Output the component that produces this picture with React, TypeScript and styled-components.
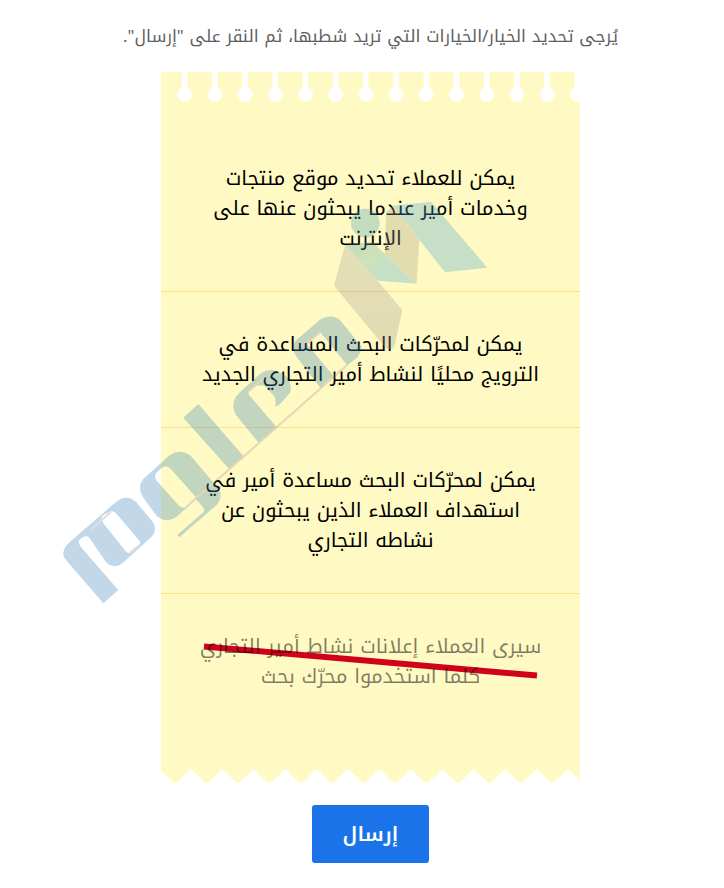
import React, { useState } from "react";
import styled, { createGlobalStyle } from "styled-components";

const GlobalStyle = createGlobalStyle`
  *, *::before, *::after { box-sizing: border-box; }
  body {
    margin: 0;
    background: #fff;
    font-family: "Noto Kufi Arabic", "DejaVu Sans", sans-serif;
  }
`;

const PAPER = "#fffac3";

const Page = styled.main`
  display: flex;
  flex-direction: column;
  align-items: center;
  padding: 20px 8px 24px 25px;
`;

const Prompt = styled.p`
  margin: 0 0 20px;
  font-size: 17px;
  line-height: 32px;
  color: #5f6062;
  text-align: center;
`;

const Sheet = styled.form`
  display: flex;
  flex-direction: column;
  align-items: center;
  width: 100%;
`;

const Note = styled.fieldset`
  position: relative;
  display: flex;
  flex-direction: column;
  width: 100%;
  max-width: 419px;
  margin: 0 0 22px;
  padding: 0;
  border: 0;
`;

const Edge = styled.svg`
  display: block;
  width: 100%;
`;

const OptionList = styled.ul`
  margin: 0;
  padding: 22px 0 40px;
  list-style: none;
  background: ${PAPER};
`;

const OptionItem = styled.li`
  & + & {
    border-top: 1px solid #fde08c;
  }
`;

const OptionLabel = styled.label`
  display: block;
  position: relative;
  padding: 37px 38px 38px;
  cursor: pointer;
`;

const HiddenCheck = styled.input`
  position: absolute;
  opacity: 0;
  inset: 0;
  margin: 0;
  cursor: pointer;
`;

const OptionText = styled.span<{ $struck: boolean }>`
  display: block;
  position: relative;
  font-size: 20px;
  line-height: 30px;
  text-align: center;
  color: ${(p) => (p.$struck ? "rgba(0, 0, 0, 0.5)" : "#000")};
`;

const Strike = styled.svg`
  position: absolute;
  inset: 0;
  width: 100%;
  height: 100%;
  pointer-events: none;
`;

const Watermark = styled.svg`
  position: absolute;
  top: 118px;
  left: -111px;
  width: 440px;
  height: 420px;
  opacity: 0.3;
  pointer-events: none;
`;

const SubmitButton = styled.button`
  min-width: 117px;
  padding: 14px 28px;
  border: 0;
  border-radius: 3px;
  background: #1a73e8;
  color: #fff;
  font: 600 20px/30px "Noto Kufi Arabic", "DejaVu Sans", sans-serif;
  cursor: pointer;
`;

function PunchedEdge() {
  return (
    <Edge height="32" aria-hidden="true">
      <defs>
        <pattern id="holes" width="30.2" height="32" patternUnits="userSpaceOnUse" x="8.6">
          <rect x="12.4" width="5.4" height="20" fill="#fff" />
          <circle cx="15.1" cy="22.4" r="7.3" fill="#fff" />
        </pattern>
      </defs>
      <rect width="100%" height="32" fill={PAPER} />
      <rect x="8.6" width="100%" height="32" fill="url(#holes)" />
    </Edge>
  );
}

function TornEdge() {
  return (
    <Edge height="14" aria-hidden="true">
      <defs>
        <pattern id="teeth" width="31.45" height="14" patternUnits="userSpaceOnUse" x="-1.7">
          <path d="M0 0H31.45L17.7 13.2Q15.7 14.4 13.7 13.2Z" fill={PAPER} />
        </pattern>
      </defs>
      <rect width="100%" height="14" fill="url(#teeth)" />
    </Edge>
  );
}

function BrandMark() {
  return (
    <Watermark viewBox="50 190 440 420" aria-hidden="true">
      <defs>
        <linearGradient id="fold" x1="0" y1="0.2" x2="1" y2="0.8">
          <stop offset="0" stopColor="#3e9bad" />
          <stop offset="0.35" stopColor="#62a99f" />
          <stop offset="0.55" stopColor="#46a9cd" />
          <stop offset="1" stopColor="#46a3d0" />
        </linearGradient>
        <linearGradient id="sand" x1="0" y1="0" x2="0" y2="1">
          <stop offset="0" stopColor="#a0a49a" />
          <stop offset="1" stopColor="#a3968f" />
        </linearGradient>
      </defs>
      <g transform="translate(325 190) scale(0.33333)">
        <path d="M60 165L27 287L180 472Q195 484 208 470L232 360L158 272Z" fill="url(#sand)" />
        <path d="M183 68L203 47L283 150L275 281L180 192Z" fill="#a09a84" />
        <path d="M60 165L142 155L180 192L275 281L158 272Z" fill="url(#fold)" />
        <path d="M203 47L318 35L487 233L360 247Z" fill="#46a3ce" />
        <circle cx="121" cy="99" r="43" fill="#3e9bb5" />
      </g>
      <g transform="translate(40 380) scale(0.33333)" fill="#3781b6" fillRule="evenodd">
        <path d="M70 525Q68 505 90 485L228 366Q260 340 288 366L338 425Q354 450 335 470L255 543Q225 572 198 547L147 472Q135 463 118 480Q114 488 122 500L235 630L190 670L78 540Q70 532 70 525ZM185 418Q183 410 190 405L207 396Q220 390 230 402L298 482Q303 490 297 497L274 517Q264 522 256 512L190 430Z" />
        <path d="M300 325Q298 305 320 288L390 225Q420 205 450 225L535 325Q550 350 530 375L418 472L412 465L490 397Q496 389 488 380L468 358L410 410Q380 432 350 408L308 350Q300 338 300 325ZM345 287Q346 280 354 274L365 264Q378 252 392 266L468 352L434 383Q424 385 415 375L348 300Z" />
        <path d="M430 113L475 72L612 230L568 268Z" />
        <path d="M580 82Q578 58 598 38L665 -22Q700 -42 738 -12Q758 15 750 38L728 64Q712 82 705 78Q710 62 702 48L675 18Q655 10 630 30Q622 38 628 46L710 142L655 187L588 105Q581 94 580 82Z" />
        <path d="M760 -97Q758 -110 772 -122L842 -182Q875 -200 900 -180L965 -100Q962 -80 950 -66L922 -44L840 -144L800 -109L880 -13L842 24L768 -72Q761 -84 760 -97Z" />
      </g>
      <g transform="translate(40 380) scale(0.33333)" fill="none" stroke="#a58c8c" strokeWidth="6">
        <path d="M468 355L568 268L710 142L922 -46" />
        <path d="M270 518L300 494M150 452L212 396" />
        <path d="M800 -108L842 -145M628 32L672 -6" />
      </g>
    </Watermark>
  );
}

const OPTIONS = [
  "يمكن للعملاء تحديد موقع منتجات وخدمات أمير عندما يبحثون عنها على الإنترنت",
  "يمكن لمحرّكات البحث المساعدة في الترويج محليًا لنشاط أمير التجاري الجديد",
  "يمكن لمحرّكات البحث مساعدة أمير في استهداف العملاء الذين يبحثون عن نشاطه التجاري",
  "سيرى العملاء إعلانات نشاط أمير التجاري كلما استخدموا محرّك بحث",
];

export default function App() {
  const [struck, setStruck] = useState<number[]>([3]);

  const toggle = (index: number) =>
    setStruck((current) =>
      current.includes(index) ? current.filter((i) => i !== index) : [...current, index]
    );

  return (
    <>
      <GlobalStyle />
      <Page dir="rtl" lang="ar">
        <Prompt id="prompt">
          يُرجى تحديد الخيار/الخيارات التي تريد شطبها، ثم النقر على "إرسال".
        </Prompt>
        <Sheet onSubmit={(event) => event.preventDefault()}>
          <Note aria-labelledby="prompt">
            <PunchedEdge />
            <OptionList>
              {OPTIONS.map((text, index) => {
                const isStruck = struck.includes(index);
                return (
                  <OptionItem key={text}>
                    <OptionLabel>
                      <HiddenCheck
                        type="checkbox"
                        checked={isStruck}
                        onChange={() => toggle(index)}
                      />
                      {isStruck && (
                        <Strike viewBox="0 0 419 135" preserveAspectRatio="none" aria-hidden="true">
                          <path d="M43 52.5L376 81.5" stroke="#d0021b" strokeWidth="6" />
                        </Strike>
                      )}
                      <OptionText $struck={isStruck}>{text}</OptionText>
                    </OptionLabel>
                  </OptionItem>
                );
              })}
            </OptionList>
            <TornEdge />
            <BrandMark />
          </Note>
          <SubmitButton type="submit">إرسال</SubmitButton>
        </Sheet>
      </Page>
    </>
  );
}
